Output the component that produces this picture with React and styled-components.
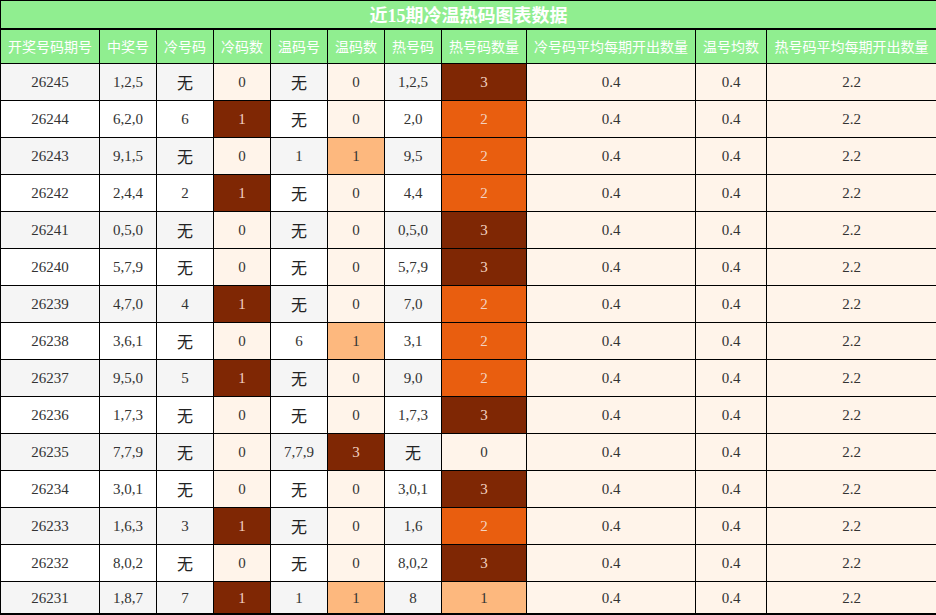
import React from "react";
import styled, { createGlobalStyle } from "styled-components";

const GlobalStyle = createGlobalStyle`
  html, body {
    margin: 0;
    padding: 0;
    background: #fff;
  }
  body {
    font-family: "Liberation Serif", "Noto Sans CJK SC", serif;
  }
`;

const Frame = styled.div`
  width: 936px;
  height: 615px;
  box-sizing: border-box;
  border-bottom: 2px solid #000;
  overflow: hidden;
`;

const Table = styled.table`
  width: 936px;
  border-collapse: collapse;
  table-layout: fixed;
`;

const TitleRow = styled.tr`
  height: 28px;
`;

const Title = styled.th`
  background: #90ee90;
  color: #fff;
  font-size: 18px;
  font-weight: bold;
  text-align: center;
  border: 1px solid #000;
  border-bottom: 2px solid #000;
  padding: 0;
`;

const HeadRow = styled.tr`
  height: 35px;
`;

const HeadCell = styled.th`
  background: #90ee90;
  color: #fff;
  font-family: "Noto Sans CJK SC", sans-serif;
  font-size: 14px;
  font-weight: normal;
  text-align: center;
  border: 1px solid #000;
  padding: 0;
  white-space: nowrap;
`;

const Row = styled.tr`
  height: ${({ $short }) => ($short ? "33px" : "37px")};
  background: ${({ $odd }) => ($odd ? "#f5f5f5" : "#fff")};
`;

const Cell = styled.td`
  border: 1px solid #000;
  padding: 0;
  text-align: center;
  font-size: 15px;
  color: ${({ $dark }) => ($dark ? "#f3d2c2" : "#333")};
  background: ${({ $bg }) => $bg || "transparent"};
`;

const Word = styled.span`
  font-family: "Noto Sans CJK SC", sans-serif;
  font-size: 16px;
  color: #222;
`;

const widths = [99, 57, 57, 57, 57, 57, 57, 85, 169, 71, 170];

const headers = [
  "开奖号码期号",
  "中奖号",
  "冷号码",
  "冷码数",
  "温码号",
  "温码数",
  "热号码",
  "热号码数量",
  "冷号码平均每期开出数量",
  "温号均数",
  "热号码平均每期开出数量",
];

const rows = [
  ["26245", "1,2,5", "无", 0, "无", 0, "1,2,5", 3],
  ["26244", "6,2,0", "6", 1, "无", 0, "2,0", 2],
  ["26243", "9,1,5", "无", 0, "1", 1, "9,5", 2],
  ["26242", "2,4,4", "2", 1, "无", 0, "4,4", 2],
  ["26241", "0,5,0", "无", 0, "无", 0, "0,5,0", 3],
  ["26240", "5,7,9", "无", 0, "无", 0, "5,7,9", 3],
  ["26239", "4,7,0", "4", 1, "无", 0, "7,0", 2],
  ["26238", "3,6,1", "无", 0, "6", 1, "3,1", 2],
  ["26237", "9,5,0", "5", 1, "无", 0, "9,0", 2],
  ["26236", "1,7,3", "无", 0, "无", 0, "1,7,3", 3],
  ["26235", "7,7,9", "无", 0, "7,7,9", 3, "无", 0],
  ["26234", "3,0,1", "无", 0, "无", 0, "3,0,1", 3],
  ["26233", "1,6,3", "3", 1, "无", 0, "1,6", 2],
  ["26232", "8,0,2", "无", 0, "无", 0, "8,0,2", 3],
  ["26231", "1,8,7", "7", 1, "1", 1, "8", 1],
];

const CREAM = "#fff4ea";
const scale = ["#fff4ea", "#fdb87e", "#e95e0f", "#7f2704"];

// per-column scale: value relative to the column's max
const heat = (value, max) => {
  const step = Math.round((value / max) * 3);
  return { bg: scale[step], dark: step >= 2 };
};

const text = (v) => (v === "无" ? <Word>无</Word> : v);

export default function App() {
  const coldMax = Math.max(...rows.map((r) => r[3]));
  const warmMax = Math.max(...rows.map((r) => r[5]));
  const hotMax = Math.max(...rows.map((r) => r[7]));

  return (
    <Frame>
      <GlobalStyle />
      <Table>
        <colgroup>
          {widths.map((w, i) => (
            <col key={i} style={{ width: w }} />
          ))}
        </colgroup>
        <thead>
          <TitleRow>
            <Title colSpan={11}>近15期冷温热码图表数据</Title>
          </TitleRow>
          <HeadRow>
            {headers.map((h) => (
              <HeadCell key={h}>{h}</HeadCell>
            ))}
          </HeadRow>
        </thead>
        <tbody>
          {rows.map((r, i) => {
            const cold = heat(r[3], coldMax);
            const warm = heat(r[5], warmMax);
            const hot = heat(r[7], hotMax);
            return (
              <Row key={r[0]} $odd={i % 2 === 0} $short={i === rows.length - 1}>
                <Cell>{r[0]}</Cell>
                <Cell>{r[1]}</Cell>
                <Cell>{text(r[2])}</Cell>
                <Cell $bg={cold.bg} $dark={cold.dark}>
                  {r[3]}
                </Cell>
                <Cell>{text(r[4])}</Cell>
                <Cell $bg={warm.bg} $dark={warm.dark}>
                  {r[5]}
                </Cell>
                <Cell>{text(r[6])}</Cell>
                <Cell $bg={hot.bg} $dark={hot.dark}>
                  {r[7]}
                </Cell>
                <Cell $bg={CREAM}>0.4</Cell>
                <Cell $bg={CREAM}>0.4</Cell>
                <Cell $bg={CREAM}>2.2</Cell>
              </Row>
            );
          })}
        </tbody>
      </Table>
    </Frame>
  );
}
